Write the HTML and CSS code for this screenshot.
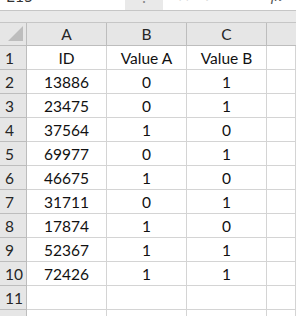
FILE: index.html
```html
<!DOCTYPE html>
<html>
  <head>
    <title>Sheet</title>
    <link rel="stylesheet" href="styles.css">
  </head>
  <body>
    <div class="topbar">
      <div class="name-box"><span class="cut">E15</span></div>
      <div class="splitter"><span class="cut dots">⋮</span></div>
      <div class="formula">
        <span class="cut icon">✕</span>
        <span class="cut icon">✓</span>
        <span class="cut fx">fx</span>
      </div>
    </div>
    <div class="gap"></div>

    <div class="sheet">
      <div class="corner">
        <svg width="16" height="16" viewBox="0 0 16 16">
          <polygon points="0,15 15,15 15,0" fill="#bdbdbd" />
        </svg>
      </div>
      <div class="col-head">A</div>
      <div class="col-head">B</div>
      <div class="col-head">C</div>
      <div class="col-head last"></div>

      <div class="row-head">1</div>
      <div class="cell">ID</div>
      <div class="cell">Value A</div>
      <div class="cell">Value B</div>
      <div class="cell"></div>

      <div class="row-head">2</div>
      <div class="cell">13886</div>
      <div class="cell">0</div>
      <div class="cell">1</div>
      <div class="cell"></div>

      <div class="row-head">3</div>
      <div class="cell">23475</div>
      <div class="cell">0</div>
      <div class="cell">1</div>
      <div class="cell"></div>

      <div class="row-head">4</div>
      <div class="cell">37564</div>
      <div class="cell">1</div>
      <div class="cell">0</div>
      <div class="cell"></div>

      <div class="row-head">5</div>
      <div class="cell">69977</div>
      <div class="cell">0</div>
      <div class="cell">1</div>
      <div class="cell"></div>

      <div class="row-head">6</div>
      <div class="cell">46675</div>
      <div class="cell">1</div>
      <div class="cell">0</div>
      <div class="cell"></div>

      <div class="row-head">7</div>
      <div class="cell">31711</div>
      <div class="cell">0</div>
      <div class="cell">1</div>
      <div class="cell"></div>

      <div class="row-head">8</div>
      <div class="cell">17874</div>
      <div class="cell">1</div>
      <div class="cell">0</div>
      <div class="cell"></div>

      <div class="row-head">9</div>
      <div class="cell">52367</div>
      <div class="cell">1</div>
      <div class="cell">1</div>
      <div class="cell"></div>

      <div class="row-head">10</div>
      <div class="cell">72426</div>
      <div class="cell">1</div>
      <div class="cell">1</div>
      <div class="cell"></div>

      <div class="row-head">11</div>
      <div class="cell"></div>
      <div class="cell"></div>
      <div class="cell"></div>
      <div class="cell"></div>

      <div class="row-head stub"></div>
      <div class="cell stub"></div>
      <div class="cell stub"></div>
      <div class="cell stub"></div>
      <div class="cell stub"></div>
    </div>
  </body>
</html>
```

FILE: styles.css
```css
* {
  box-sizing: border-box;
}

body {
  margin: 0;
  background-color: #ffffff;
  font-family: Lato, 'Open Sans', sans-serif;
  font-size: 15.5px;
  color: #1a1a1a;
  width: 296px;
  height: 316px;
  overflow: hidden;
}

.topbar {
  display: flex;
  height: 11px;
  border-bottom: 1px solid #c6c6c6;
  overflow: hidden;
}

.cut {
  display: block;
  line-height: 20px;
  margin-top: -14px;
}

.name-box {
  width: 125px;
  padding-left: 6px;
  background-color: #ffffff;
  color: #333;
}

.splitter {
  width: 38px;
  background-color: #e9e9e9;
  display: flex;
  justify-content: center;
  color: #8a8a8a;
}

.formula {
  flex: 1;
  display: flex;
  background-color: #ffffff;
  padding-left: 14px;
}

.formula .icon {
  color: #c4c4c4;
  width: 26px;
}

.formula .fx {
  margin-left: auto;
  margin-right: 14px;
  font-style: italic;
  font-family: 'Liberation Serif', serif;
  color: #555;
}

.gap {
  height: 11px;
  background-color: #e9e9e9;
}

.sheet {
  display: grid;
  grid-template-columns: 27px 80px 80px 80px 1fr;
  grid-template-rows: 23px repeat(11, 24px) 1fr;
  height: 294px;
  border-top: 1px solid #c6c6c6;
}

.corner {
  background-color: #e6e6e6;
  border-right: 1px solid #bdbdbd;
  border-bottom: 1px solid #bdbdbd;
  display: flex;
  align-items: flex-end;
  justify-content: flex-end;
  padding: 0 2px 3px 0;
}

.col-head {
  background-color: #e6e6e6;
  border-right: 1px solid #bdbdbd;
  border-bottom: 1px solid #bdbdbd;
  display: flex;
  align-items: center;
  justify-content: center;
  color: #262626;
}

.col-head.last {
  border-right: none;
}

.row-head {
  background-color: #e6e6e6;
  border-right: 1px solid #bdbdbd;
  border-bottom: 1px solid #bdbdbd;
  display: flex;
  align-items: center;
  padding-left: 5px;
  color: #262626;
}

.cell {
  border-right: 1px solid #d4d4d4;
  border-bottom: 1px solid #d4d4d4;
  display: flex;
  align-items: center;
  justify-content: center;
  color: #111;
}

.stub {
  border-bottom: none;
}
```
